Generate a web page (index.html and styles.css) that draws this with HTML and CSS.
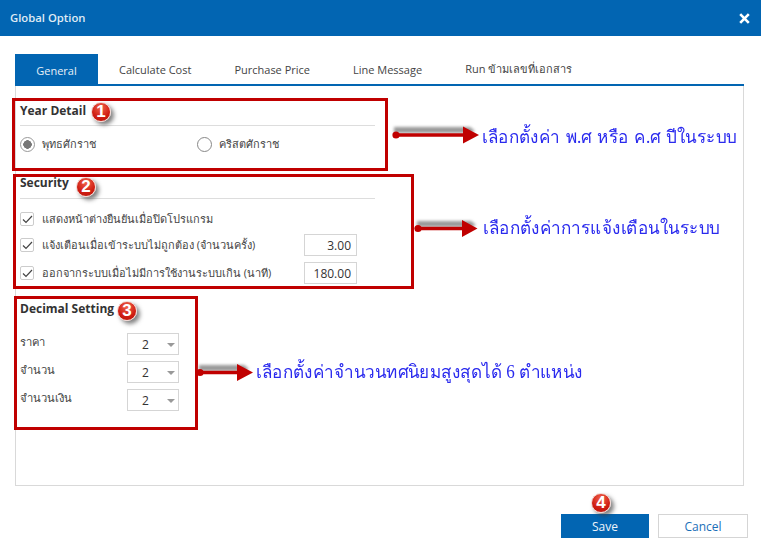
FILE: index.html
```html
<!DOCTYPE html>
<html lang="th">
<head>
<meta charset="utf-8">
<title>Global Option</title>
<link rel="stylesheet" href="styles.css">
</head>
<body>
<div class="dialog">
  <header class="titlebar">
    <span class="title">Global Option</span>
    <svg class="close" width="11" height="11" viewBox="0 0 11 11"><path d="M1.2 1.2 9.8 9.8M9.8 1.2 1.2 9.8" stroke="#fff" stroke-width="2.6"/></svg>
  </header>
  <main class="content">
    <nav class="tabs">
      <span class="tab active">General</span>
      <span class="tab t2">Calculate Cost</span>
      <span class="tab t3">Purchase Price</span>
      <span class="tab t4">Line Message</span>
      <span class="tab t5">Run ข้ามเลขที่เอกสาร</span>
    </nav>
    <section class="panel">
      <div class="group year">
        <h3 class="head">Year Detail</h3>
        <div class="radios">
          <label class="radio on"><i class="dot"></i>พุทธศักราช</label>
          <label class="radio"><i class="dot"></i>คริสตศักราช</label>
        </div>
      </div>
      <div class="group security">
        <h3 class="head">Security</h3>
        <div class="row r1"><i class="check"><svg width="11" height="9" viewBox="0 0 11 9"><path d="M1 4.500 4 7.500 10 1" fill="none" stroke="#444" stroke-width="1.2"/></svg></i><span class="lbl">แสดงหน้าต่างยืนยันเมื่อปิดโปรแกรม</span></div>
        <div class="row r2"><i class="check"><svg width="11" height="9" viewBox="0 0 11 9"><path d="M1 4.500 4 7.500 10 1" fill="none" stroke="#444" stroke-width="1.2"/></svg></i><span class="lbl">แจ้งเตือนเมื่อเข้าระบบไม่ถูกต้อง (จำนวนครั้ง)</span><span class="num">3.00</span></div>
        <div class="row r3"><i class="check"><svg width="11" height="9" viewBox="0 0 11 9"><path d="M1 4.500 4 7.500 10 1" fill="none" stroke="#444" stroke-width="1.2"/></svg></i><span class="lbl">ออกจากระบบเมื่อไม่มีการใช้งานระบบเกิน (นาที)</span><span class="num">180.00</span></div>
      </div>
      <div class="group decimal">
        <h3 class="head plain">Decimal Setting</h3>
        <div class="sel-row"><span class="sel-lbl">ราคา</span><span class="sel">2<b class="caret"></b></span></div>
        <div class="sel-row"><span class="sel-lbl">จำนวน</span><span class="sel">2<b class="caret"></b></span></div>
        <div class="sel-row"><span class="sel-lbl">จำนวนเงิน</span><span class="sel">2<b class="caret"></b></span></div>
      </div>
    </section>
    <footer class="actions">
      <span class="btn save">Save</span>
      <span class="btn cancel">Cancel</span>
    </footer>
  </main>

  <div class="mark m1"></div>
  <div class="mark m2"></div>
  <div class="mark m3"></div>

  <span class="badge b1">1</span>
  <span class="badge b2">2</span>
  <span class="badge b3">3</span>
  <span class="badge b4">4</span>

  <svg class="arrows" width="761" height="556" viewBox="0 0 761 556">
    <defs><filter id="blur" x="-10%" y="-200%" width="120%" height="500%"><feGaussianBlur stdDeviation="1.4"/></filter></defs>
    <g fill="#999" filter="url(#blur)">
      <path d="M394 127h76l5 4-4 2h-77z"/>
      <path d="M417 221h54l5 4-4 2h-55z"/>
      <path d="M199 365h45l5 4-4 2h-46z"/>
    </g>
    <g fill="#c00000">
      <circle cx="396" cy="135" r="3.600"/><path d="M396 133.200h67v-6.700l16 8.500-16 8.500v-6.700h-67z"/>
      <circle cx="418" cy="228.500" r="3.600"/><path d="M418 226.700h44v-6.700l15.500 8.500-15.500 8.500v-6.700h-44z"/>
      <circle cx="200" cy="372.500" r="3.600"/><path d="M200 370.700h37v-6.700l16 8.500-16 8.500v-6.700h-37z"/>
    </g>
  </svg>

  <span class="note n1">เลือกตั้งค่า พ.ศ หรือ ค.ศ ปีในระบบ</span>
  <span class="note n2">เลือกตั้งค่าการแจ้งเตือนในระบบ</span>
  <span class="note n3">เลือกตั้งค่าจำนวนทศนิยมสูงสุดได้ 6 ตำแหน่ง</span>
</div>
</body>
</html>
```
FILE: styles.css
```css
* { box-sizing: border-box; }
html, body { margin: 0; padding: 0; background: #fff; }
.dialog {
  position: relative;
  width: 761px;
  height: 556px;
  overflow: hidden;
  font-family: "Open Sans", "Noto Sans", sans-serif;
  font-size: 11px;
  color: #333;
}
.titlebar {
  height: 36px;
  background: #0265b2;
  color: #dfeaf4;
  display: flex;
  align-items: center;
  justify-content: space-between;
  padding: 0 11px 0 10px;
}
.title { font-weight: 600; font-size: 11.300px; padding-bottom: 1px; }
.close { margin-top: 1px; }
.content { padding: 18px 17px 0 15px; }
.tabs {
  display: flex;
  height: 32px;
  border-bottom: 2px solid #0265b2;
}
.tab {
  display: flex;
  align-items: center;
  color: #444;
}
.tab.active {
  width: 83px;
  height: 32px;
  justify-content: center;
  background: #0265b2;
  color: #e8f0f7;
}
.t2 { margin-left: 21px; }
.t3 { margin-left: 43px; }
.t4 { margin-left: 43px; }
.t5 { margin-left: 43px; }
.panel {
  height: 400px;
  border: 1px solid #d9d9d9;
  border-top: 0;
  padding: 0 4px;
}
.group { position: relative; }
.head {
  margin: 0;
  font-size: 12px;
  font-weight: 700;
  color: #333;
  border-bottom: 1px solid #ddd;
  width: 355px;
}
.head.plain { border-bottom: 0; width: auto; }
.year { padding-top: 16px; height: 89px; }
.year .head { height: 24px; line-height: 17px; }
.radios { display: flex; padding-top: 8px; }
.radio { display: flex; align-items: center; width: 177px; height: 20px; color: #444; }
.dot {
  width: 15px;
  height: 15px;
  border: 1px solid #888;
  border-radius: 50%;
  margin-right: 7px;
  background: #fff;
  flex: none;
}
.radio.on .dot { border-color: #999; background: radial-gradient(circle, #777 0 4px, #fff 4.500px); }
.security { height: 123px; }
.security .head { height: 24px; line-height: 16px; }
.row { display: flex; align-items: center; height: 22px; position: relative; }
.r1 { margin-top: 9px; }
.r2 { margin-top: 4px; }
.r3 { margin-top: 6px; }
.check {
  display: flex;
  align-items: center;
  justify-content: center;
  width: 14px;
  height: 14px;
  border: 1px solid #ccc;
  border-radius: 2px;
  margin-right: 8px;
  flex: none;
}
.lbl { color: #444; }
.num {
  position: absolute;
  left: 284px;
  top: 0;
  width: 53px;
  height: 22px;
  border: 1px solid #d5d5d5;
  font-size: 12px;
  text-align: right;
  padding-right: 5px;
  line-height: 21px;
  color: #333;
}
.decimal { padding-top: 3px; }
.decimal .head { height: 18px; line-height: 16px; margin-bottom: 14px; }
.sel-row { display: flex; align-items: flex-start; height: 22px; margin-bottom: 6px; }
.sel-lbl { width: 107px; font-size: 11.200px; line-height: 17px; color: #444; }
.sel {
  position: relative;
  width: 52px;
  height: 22px;
  border: 1px solid #d5d5d5;
  font-size: 12px;
  padding-left: 14px;
  line-height: 21px;
  color: #333;
}
.caret {
  position: absolute;
  right: 3px;
  top: 9px;
  width: 0;
  height: 0;
  border-left: 4px solid transparent;
  border-right: 4px solid transparent;
  border-top: 4px solid #999;
}
.actions {
  display: flex;
  padding: 28px 0 0 546px;
  gap: 9px;
}
.btn {
  display: flex;
  align-items: center;
  justify-content: center;
  height: 24px;
  flex: none;
  font-size: 12px;
}
.save { width: 88px; background: #0265b2; color: #eef4fa; }
.cancel { width: 90px; border: 1px solid #d5d5d5; color: #1a6fb8; }

.mark { position: absolute; border: 3px solid #c00000; }
.m1 { left: 12px; top: 98px; width: 376px; height: 73px; }
.m2 { left: 13px; top: 174px; width: 401px; height: 115px; }
.m3 { left: 14px; top: 296px; width: 184px; height: 134px; }

.badge {
  position: absolute;
  width: 20px;
  height: 20px;
  border-radius: 50%;
  background: radial-gradient(circle at 50% 25%, #f0634c, #cf1d12 60%, #b81309);
  border: 1px solid #f3d5d0;
  box-shadow: 3px 3px 4px rgba(60, 60, 60, .65);
  color: #fff;
  font: 700 17px/18px "Liberation Sans", sans-serif;
  text-align: center;
}
.b1 { left: 91px; top: 102px; }
.b2 { left: 76px; top: 177px; }
.b3 { left: 117px; top: 301px; }
.b4 { left: 591px; top: 493px; }

.arrows { position: absolute; left: 0; top: 0; pointer-events: none; }
.note {
  position: absolute;
  font-family: "Liberation Serif", serif;
  font-size: 18px;
  line-height: 24px;
  color: #2a2aee;
  white-space: nowrap;
  transform: scaleX(.95);
  transform-origin: left center;
}
.n1 { left: 482px; top: 125px; word-spacing: 1.500px; }
.n2 { left: 483px; top: 216px; }
.n3 { left: 256px; top: 360px; }
```
